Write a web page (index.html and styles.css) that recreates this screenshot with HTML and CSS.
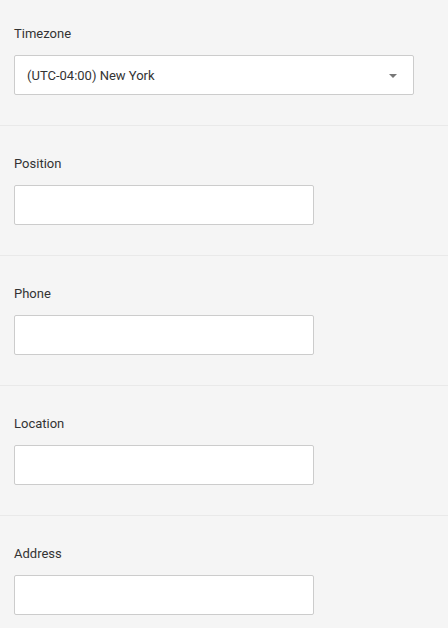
FILE: index.html
```html
<!DOCTYPE html>
<html>
<head>
<meta charset="utf-8">
<link rel="stylesheet" href="styles.css">
</head>
<body>
<div class="form">
  <div class="field">
    <label class="label">Timezone</label>
    <div class="select">
      <span class="select-value">(UTC-04:00) New York</span>
      <span class="caret"></span>
    </div>
  </div>
  <div class="field">
    <label class="label">Position</label>
    <input class="input" type="text">
  </div>
  <div class="field">
    <label class="label">Phone</label>
    <input class="input" type="text">
  </div>
  <div class="field">
    <label class="label">Location</label>
    <input class="input" type="text">
  </div>
  <div class="field">
    <label class="label">Address</label>
    <input class="input" type="text">
  </div>
</div>
</body>
</html>
```
FILE: styles.css
```css
html, body {
  margin: 0;
  padding: 0;
  background: #f5f5f5;
  font-family: Roboto, "Liberation Sans", sans-serif;
  color: #333;
}
.form {
  display: flex;
  flex-direction: column;
}
.field {
  display: flex;
  flex-direction: column;
  align-items: flex-start;
  padding: 28px 14px 30px;
  border-bottom: 1px solid #e9e9e9;
}
.field:first-child {
  padding-top: 24px;
}
.label {
  font-size: 13px;
  line-height: 20px;
  color: #333;
  margin-bottom: 11px;
}
.select, .input {
  box-sizing: border-box;
  height: 40px;
  background: #fff;
  border: 1px solid #ccc;
  border-radius: 2px;
}
.select {
  width: 400px;
  display: flex;
  align-items: center;
  justify-content: space-between;
  padding: 0 16px 0 12px;
}
.select-value {
  font-size: 13px;
  color: #333;
}
.caret {
  width: 0;
  height: 0;
  border-left: 4px solid transparent;
  border-right: 4px solid transparent;
  border-top: 4px solid #777;
  margin-top: 1px;
}
.input {
  width: 300px;
  margin: 0;
  padding: 0 12px;
  font-family: inherit;
  font-size: 13px;
  outline: none;
}
```
